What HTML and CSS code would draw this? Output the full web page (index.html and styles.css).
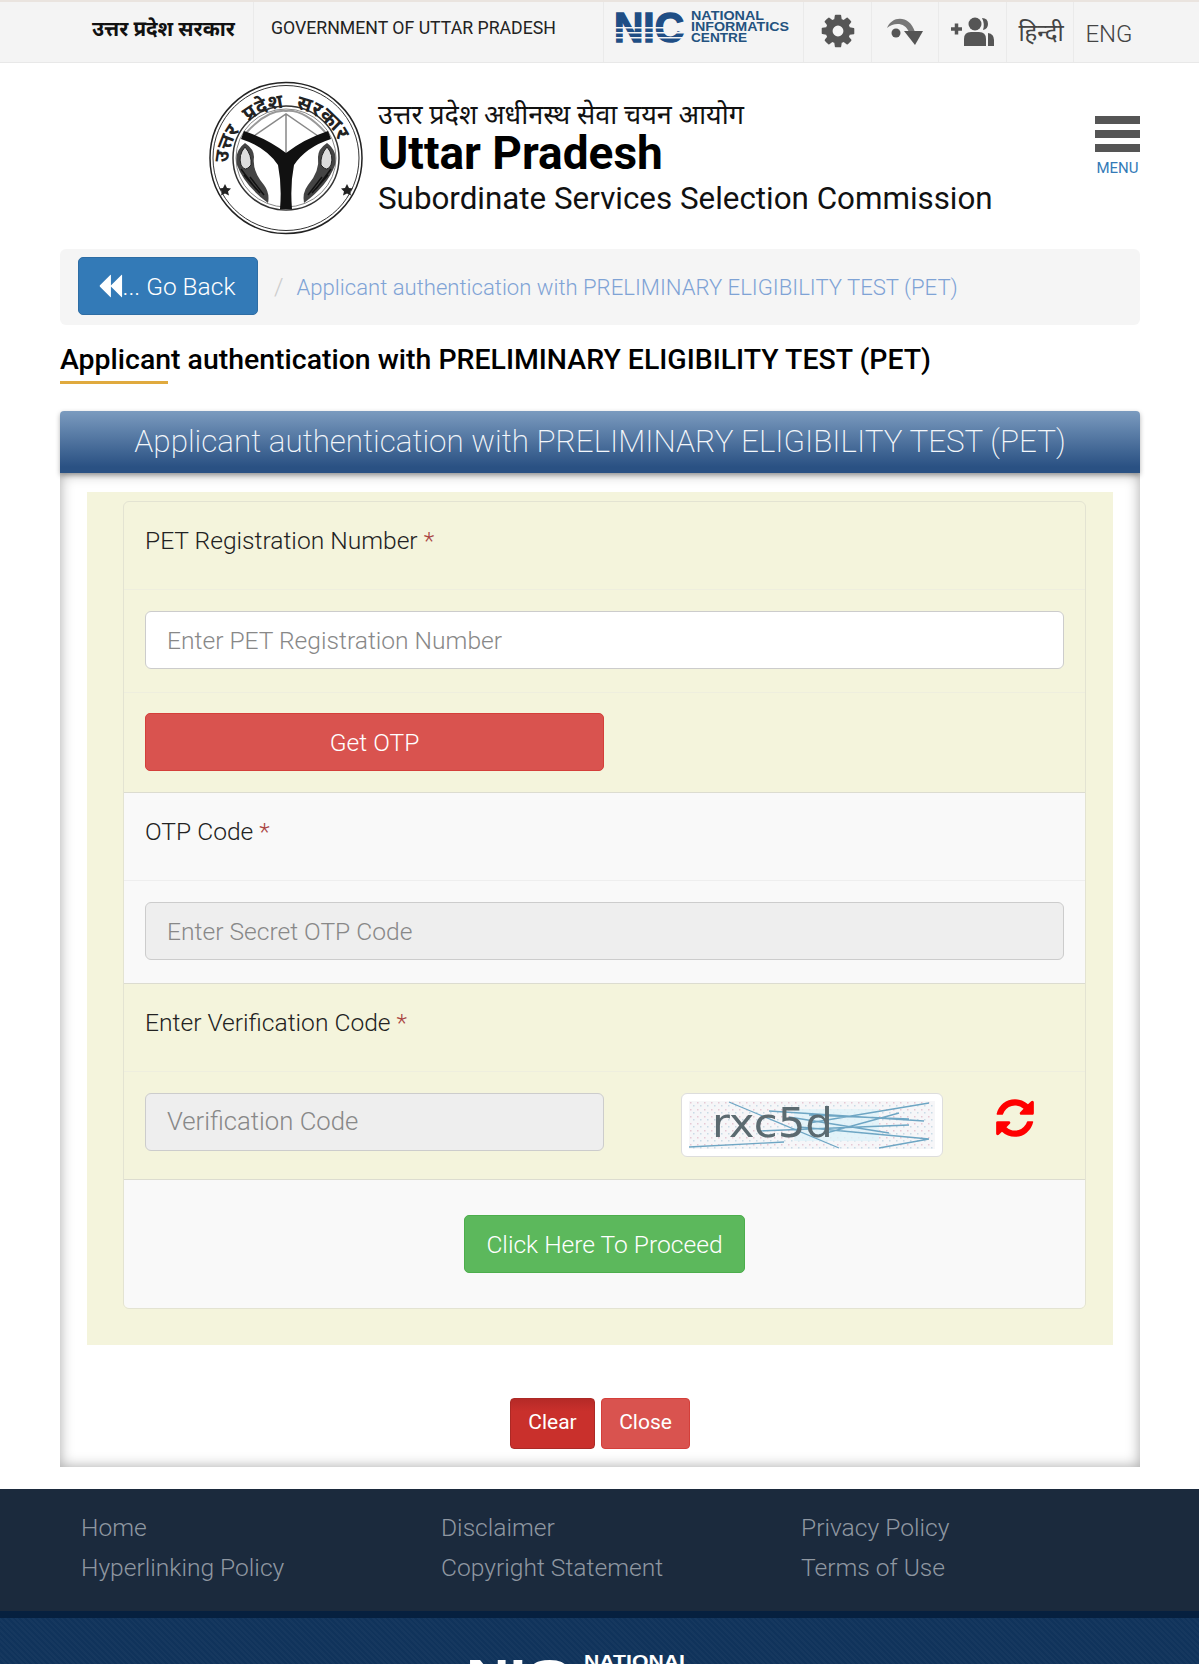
FILE: index.html
```html
<!DOCTYPE html>
<html lang="hi">
<head>
<meta charset="utf-8">
<title>UPSSSC</title>
<link rel="stylesheet" href="styles.css">
</head>
<body>
<div class="topbar">
  <div class="tb-hi">उत्तर प्रदेश सरकार</div>
  <div class="tb-en">GOVERNMENT OF UTTAR PRADESH</div>
  <div class="tb-nic">
    <svg class="nic-logo" viewBox="0 0 176 34" width="176" height="34">
      <text x="0" y="32" class="nic-big" textLength="70" lengthAdjust="spacingAndGlyphs">NIC</text>
      <rect x="-1" y="17" width="72" height="1.500" fill="#f4f4f4"/>
      <rect x="-1" y="22" width="72" height="1.500" fill="#f4f4f4"/>
      <rect x="-1" y="27" width="72" height="1.500" fill="#f4f4f4"/>
      <text x="77" y="10" class="nic-small" textLength="73" lengthAdjust="spacingAndGlyphs">NATIONAL</text>
      <text x="77" y="21" class="nic-small" textLength="98" lengthAdjust="spacingAndGlyphs">INFORMATICS</text>
      <text x="77" y="32" class="nic-small" textLength="56" lengthAdjust="spacingAndGlyphs">CENTRE</text>
    </svg>
  </div>
  <div class="tb-cell tb-gear">
    <svg width="38" height="38" viewBox="0 0 1792 1792"><path fill="#555" d="M1152 896q0-106-75-181t-181-75-181 75-75 181 75 181 181 75 181-75 75-181zm512-109v222q0 12-8 23t-20 13l-185 28q-19 54-39 91 35 50 107 138 10 12 10 25t-9 23q-27 37-99 108t-94 71q-12 0-26-9l-138-108q-44 23-91 38-16 136-29 186-7 28-36 28h-222q-14 0-24.500-8.500t-11.500-21.500l-28-184q-49-16-90-37l-141 107q-10 9-25 9-14 0-25-11-126-114-165-168-7-10-7-23 0-12 8-23 15-21 51-66.500t54-70.500q-27-50-41-99l-183-27q-13-2-21-12.500t-8-23.500v-222q0-12 8-23t19-13l186-28q14-46 39-92-40-57-107-138-10-12-10-24 0-10 9-23 26-36 98.500-107.500t94.500-71.500q13 0 26 10l138 107q44-23 91-38 16-136 29-186 7-28 36-28h222q14 0 24.500 8.500t11.500 21.500l28 184q49 16 90 37l142-107q9-9 24-9 13 0 25 10 129 119 165 170 7 8 7 22 0 12-8 23-15 21-51 66.500t-54 70.500q26 50 41 98l183 28q13 2 21 12.500t8 23.500z"/></svg>
  </div>
  <div class="tb-cell tb-gear">
    <svg width="38" height="34" viewBox="0 0 38 34"><circle cx="10" cy="19" r="4.500" fill="#555"/><path d="M1 14 C6 1 24 1 29 18 L23 18 C19 8 8 8 1 14 Z" fill="#777"/><path d="M18 17 H37 L29 31 Z" fill="#555"/></svg>
  </div>
  <div class="tb-cell">
    <svg width="44" height="32" viewBox="0 0 44 32"><path d="M0 13h11M5.500 7.500v11" stroke="#555" stroke-width="3.500" fill="none"/><circle cx="24" cy="8" r="6.500" fill="#555"/><path d="M13 30 V23 Q13 16 20 16 H28 Q35 16 35 23 V30 Z" fill="#555"/><path d="M31 2 Q37 2 37 8 Q37 13 32 14 Q34 8 31 2 Z" fill="#555"/><path d="M37 17 Q43 18 43 24 V30 H37 Z" fill="#555"/></svg>
  </div>
  <div class="tb-cell tb-lang">हिन्दी</div>
  <div class="tb-eng">ENG</div>
</div>

<header class="brand">
  <svg class="emblem" viewBox="0 0 156 154" width="156" height="154">
    <defs>
      <path id="arc" d="M20 84 A58 57 0 1 1 136 84"/>
      <g id="fish">
        <path d="M37 62 Q26 70 29 84 Q36 104 60 122 Q62 112 56 104 Q44 90 46 76 Q46 68 37 62 Z" fill="#444"/>
        <path d="M37 66 Q30 74 33 84 Q37 92 43 84 Q44 74 37 66 Z" fill="#ddd" stroke="#222" stroke-width="1"/>
        <path d="M36 94 L52 112 M33 88 L48 108 M42 96 L56 114" stroke="#111" stroke-width="1.500" fill="none"/>
      </g>
    </defs>
    <ellipse cx="78" cy="77" rx="76" ry="75.500" fill="#fff" stroke="#222" stroke-width="1.500"/>
    <ellipse cx="78" cy="77" rx="73" ry="72.500" fill="none" stroke="#333" stroke-width="1"/>
    <ellipse cx="78" cy="77" rx="53" ry="52" fill="none" stroke="#333" stroke-width="1.500"/>
    <ellipse cx="78" cy="77" rx="50" ry="49" fill="none" stroke="#888" stroke-width="1"/>
    <text class="emblem-text"><textPath href="#arc" startOffset="2">उत्तर प्रदेश सरकार</textPath></text>
    <path d="M78 33 V80 M46 55 L78 33 L110 55" fill="none" stroke="#888" stroke-width="1.500"/>
    <path d="M38 52 Q60 28 78 30 Q96 28 118 52" fill="none" stroke="#999" stroke-width="2"/>
    <path d="M33 58 Q58 66 70 84 Q74 104 72 128 H84 Q82 104 86 84 Q98 66 123 58 L120 50 Q96 58 78 72 Q60 58 36 50 Z" fill="#111"/>
    <use href="#fish"/>
    <use href="#fish" transform="translate(156 0) scale(-1 1)"/>
    <path d="M17 103 l2 4 4 .5-3 3 1 4-4-2-4 2 1-4-3-3 4-.5z" fill="#222"/>
    <path d="M139 103 l2 4 4 .5-3 3 1 4-4-2-4 2 1-4-3-3 4-.5z" fill="#222"/>
  </svg>
  <div class="brand-text">
    <div class="brand-hi">उत्तर प्रदेश अधीनस्थ सेवा चयन आयोग</div>
    <div class="brand-title">Uttar Pradesh</div>
    <div class="brand-sub">Subordinate Services Selection Commission</div>
  </div>
  <div class="menu">
    <span class="menu-bars"></span>
    <span class="menu-label">MENU</span>
  </div>
</header>

<main class="wrap">
  <nav class="crumb">
    <a class="back-btn"><svg width="26" height="26" viewBox="0 0 1792 1792"><path fill="#fff" d="M1683 141q19-19 32-13t13 32v1472q0 26-13 32t-32-13l-710-710q-9-9-13-19v710q0 26-13 32t-32-13l-710-710q-19-19-19-45t19-45l710-710q19-19 32-13t13 32v710q4-10 13-19z"/></svg><span class="back-text">... Go Back</span></a>
    <span class="crumb-sep">/</span>
    <span class="crumb-link">Applicant authentication with PRELIMINARY ELIGIBILITY TEST (PET)</span>
  </nav>
  <h1 class="page-title">Applicant authentication with PRELIMINARY ELIGIBILITY TEST (PET)</h1>

  <section class="panel">
    <h2 class="panel-head">Applicant authentication with PRELIMINARY ELIGIBILITY TEST (PET)</h2>
    <div class="panel-body">
      <div class="tint">
        <form class="card">
          <div class="group">
            <div class="label-row">PET Registration Number <i>*</i></div>
            <div class="input-row"><div class="field">Enter PET Registration Number</div></div>
            <div class="btn-row"><div class="half"><a class="btn btn-red">Get OTP</a></div></div>
          </div>
          <div class="group group-w">
            <div class="label-row">OTP Code <i>*</i></div>
            <div class="input-row input-row-s"><div class="field field-off">Enter Secret OTP Code</div></div>
          </div>
          <div class="group">
            <div class="label-row">Enter Verification Code <i>*</i></div>
            <div class="captcha-row">
              <div class="half"><div class="field field-off field-lg">Verification Code</div></div>
              <div class="captcha">
                <svg class="captcha-img" viewBox="0 0 246 48" width="246" height="48">
                  <defs>
                    <pattern id="speck" width="7" height="7" patternUnits="userSpaceOnUse">
                      <rect width="7" height="7" fill="#f6f6f8"/>
                      <rect x="1" y="1" width="1.500" height="1.500" fill="#e6c9d4"/>
                      <rect x="4" y="4" width="1.500" height="1.500" fill="#c9dbe6"/>
                    </pattern>
                  </defs>
                  <rect width="246" height="48" fill="url(#speck)"/>
                  <rect x="105" y="8" width="85" height="32" fill="#dff2f9" opacity=".8"/>
                  <g stroke="#6ea6c4" stroke-width="1.300" fill="none">
                    <path d="M0 46 L95 41 M40 1 L150 47 M80 10 L235 20 M120 22 L240 2 M110 26 L240 38 M100 16 L200 32 M190 47 L240 38 M70 30 L220 24 M130 34 L210 12 M120 14 L220 18"/>
                  </g>
                  <text x="23" y="36" class="captcha-text" textLength="121" lengthAdjust="spacingAndGlyphs">rxc5d</text>
                </svg>
              </div>
              <svg class="refresh" width="44" height="44" viewBox="0 0 1792 1792"><path fill="#f00" d="M1639 1056q0 5-1 7-64 268-268 434.500t-478 166.500q-146 0-282.500-55t-243.500-157l-129 129q-19 19-45 19t-45-19-19-45v-448q0-26 19-45t45-19h448q26 0 45 19t19 45-19 45l-137 137q71 66 161 102t187 36q134 0 250-65t186-179q11-17 53-117 8-23 30-23h192q13 0 22.500 9.500t9.500 22.500zm25-800v448q0 26-19 45t-45 19h-448q-26 0-45-19t-19-45 19-45l138-138q-148-137-349-137-134 0-250 65t-186 179q-11 17-53 117-8 23-30 23h-199q-13 0-22.500-9.500t-9.500-22.500v-7q65-268 270-434.500t480-166.500q146 0 284 55.500t245 156.500l130-129q19-19 45-19t45 19 19 45z"/></svg>
            </div>
          </div>
          <div class="group group-w proceed">
            <a class="btn btn-green">Click Here To Proceed</a>
          </div>
        </form>
      </div>
      <div class="actions">
        <a class="act act-dark">Clear</a>
        <a class="act act-light">Close</a>
      </div>
    </div>
  </section>
</main>

<footer class="foot">
  <div class="foot-links">
    <a>Home</a><a>Disclaimer</a><a>Privacy Policy</a>
    <a>Hyperlinking Policy</a><a>Copyright Statement</a><a>Terms of Use</a>
  </div>
  <div class="foot-bottom">
    <svg viewBox="0 0 226 40" width="226" height="40">
      <text x="0" y="34" class="foot-nic" textLength="104" lengthAdjust="spacingAndGlyphs">NIC</text>
      <text x="118" y="13" class="foot-nat" textLength="108" lengthAdjust="spacingAndGlyphs">NATIONAL</text>
    </svg>
  </div>
</footer>
</body>
</html>
```

FILE: styles.css
```css
* { box-sizing: border-box; }
html, body { margin: 0; padding: 0; height: 1664px; overflow: hidden; }
body { background: #fff; color: #000; font-family: Roboto, "Noto Sans", "Noto Sans Devanagari", "Liberation Sans", sans-serif; width: 1199px; }
a { text-decoration: none; }

.topbar { height: 63px; background: #f4f4f4; border-top: 2px solid #eae4df; border-bottom: 1px solid #e8e8e8; display: flex; align-items: stretch; padding-left: 92px; }
.tb-hi { width: 162px; font-size: 20.6px; font-weight: 700; display: flex; align-items: center; color: #111; padding-bottom: 9px; border-right: 1px solid #eaeaea; white-space: nowrap; }
.tb-en { width: 350px; padding-left: 17px; font-size: 17.7px; color: #222; display: flex; align-items: center; padding-bottom: 9px; border-right: 1px solid #eaeaea; white-space: nowrap; }
.tb-nic { width: 200px; padding: 8px 0 0 10px; border-right: 1px solid #eaeaea; }
.nic-logo { overflow: visible; display: block; }
.nic-big { font-family: "Liberation Sans", sans-serif; font-weight: 700; font-size: 43px; fill: #1f4e85; stroke: #1f4e85; stroke-width: 1.500px; }
.nic-small { font-family: "Liberation Sans", sans-serif; font-weight: 700; font-size: 13px; fill: #23527f; }
.tb-cell { width: 67.6px; border-right: 1px solid #eaeaea; display: flex; align-items: center; justify-content: center; padding-left: 1px; padding-bottom: 1px; }
.tb-gear { padding-bottom: 3px; }
.tb-lang { font-size: 24px; color: #444; padding-left: 2px; }
.tb-eng { padding-left: 11px; font-size: 24px; color: #444; display: flex; align-items: center; font-weight: 300; padding-top: 3px; }

.brand { height: 184px; display: flex; align-items: flex-start; padding: 18px 59px 0 208px; position: relative; }
.emblem { flex: none; }
.brand-text { margin-left: 14px; padding-top: 17px; flex: 1; }
.brand-hi { font-size: 27px; line-height: 34px; color: #111; }
.brand-title { font-size: 46px; font-weight: 700; line-height: 43px; }
.brand-sub { font-size: 31.35px; line-height: 47px; color: #111; }
.menu { width: 46px; margin-top: 35px; display: flex; flex-direction: column; align-items: center; padding-left: 1px; }
.menu-bars { width: 45px; height: 36px; display: block; background: linear-gradient(#555 0 8px, transparent 8px 14px, #555 14px 22px, transparent 22px 28px, #555 28px 36px); }
.menu-label { font-size: 15px; color: #337ab7; margin-top: 7px; font-weight: 400; line-height: 18px; }
.emblem-text { font-size: 20px; font-weight: 700; fill: #222; word-spacing: 7px; }

.wrap { padding: 2px 59px 0 60px; }
.crumb { height: 76px; background: #f5f5f5; border-radius: 6px; display: flex; align-items: flex-start; padding: 8px 0 0 18px; font-size: 24px; font-weight: 300; }
.back-btn { width: 180px; height: 58px; background: #337ab7; border: 1px solid #2e6da4; border-radius: 5px; color: #fff; display: flex; align-items: center; justify-content: center; font-size: 24.5px; padding: 0 4px 0 0; }
.back-text { font-weight: 300; }
.crumb-sep { color: #ccc; margin: 16px 13px 0 16px; }
.crumb-link { color: #7fa3d5; font-size: 22.1px; margin-top: 17px; white-space: nowrap; }
.page-title { margin: 17px 0 0; font-size: 28.45px; font-weight: 500; line-height: 36px; position: relative; height: 60px; color: #000; white-space: nowrap; }
.page-title::after { content: ""; position: absolute; left: 0; top: 39px; width: 108px; height: 3px; background: #e0aa3e; }

.panel { display: block; }
.panel-head { margin: 9px 0 0; height: 62px; background: linear-gradient(#7b9bbf, #2a5183 90%, #2a5183); border-radius: 4px 4px 0 0; color: #f4f7fb; font-size: 31.4px; font-weight: 200; line-height: 62px; text-align: center; box-shadow: 0 2px 5px rgba(0,0,0,.3); position: relative; white-space: nowrap; }
.panel-body { background: #fff; box-shadow: inset 0 0 14px rgba(0,0,0,.35); padding: 19px 27px 0 27px; height: 994px; }
.tint { background: #f4f4dc; padding: 9px 27px 37px 36px; height: 853px; }
.card { border: 1px solid #e3e3d2; border-radius: 6px; height: 808px; overflow: hidden; display: block; }
.group { border-bottom: 1px solid #dcdcd0; }
.group-w { background: #f9f9f9; }
.label-row { height: 88px; padding: 21px 21px 0; font-size: 24.6px; font-weight: 300; line-height: 36px; color: #222; border-bottom: 1px solid #eeeede; }
.label-row i { color: #a94442; font-style: normal; }
.group-w .label-row { border-bottom-color: #eee; }
.input-row { height: 103px; padding: 21px 21px 0; }
.input-row-s { height: 102px; }
.group:first-child .input-row { border-bottom: 1px solid #eeeede; }
.field { height: 58px; background: #fff; border: 1px solid #ccc; border-radius: 6px; padding: 0 21px; font-size: 24.6px; font-weight: 300; color: #888; line-height: 58px; }
.field-off { background: #eee; }
.field-lg { font-size: 25.7px; line-height: 54px; }
.btn-row { height: 99px; padding: 20px 21px 0; }
.half { width: 459px; flex: none; }
.btn { display: block; height: 58px; border-radius: 5px; color: #fff; font-size: 24.6px; font-weight: 300; text-align: center; line-height: 57px; }
.btn-red { background: #d9534f; border: 1px solid #d43f3a; }
.btn-green { background: #5cb85c; border: 1px solid #4cae4c; width: 281px; }
.captcha-row { height: 107px; padding: 21px 21px 0; display: flex; align-items: flex-start; }
.captcha { margin-left: 77px; width: 262px; height: 64px; background: #fff; border: 1px solid #ddd; border-radius: 6px; padding: 7px; flex: none; }
.captcha-img { display: block; filter: blur(.7px); }
.captcha-text { font-family: "DejaVu Sans", sans-serif; font-size: 40px; fill: #5b6a70; }
.refresh { margin: 3px 0 0 50px; flex: none; }
.proceed { border-bottom: 0; height: 129px; padding-top: 35px; display: flex; justify-content: center; }
.actions { display: flex; justify-content: center; gap: 6px; padding: 53px 0 0 0; }
.act { height: 51px; border-radius: 4px; color: #fff; font-size: 21px; font-weight: 400; line-height: 47px; text-align: center; }
.act-dark { width: 85px; background: linear-gradient(#b52a27, #c9302c 25%); border: 1px solid #ac2925; }
.act-light { width: 89px; background: #d9534f; border: 1px solid #d43f3a; }

.foot { margin-top: 22px; }
.foot-links { height: 122px; background: #1b2a3d; padding: 19px 0 0 81px; display: grid; grid-template-columns: 360px 360px 360px; grid-auto-rows: 40px; font-size: 24.6px; font-weight: 300; }
.foot-links a { color: #8f97a1; line-height: 40px; }
.foot-bottom { height: 60px; border-top: 7px solid #06203f; background: #10335b; background-image: repeating-linear-gradient(45deg, rgba(255,255,255,.025) 0 2px, transparent 2px 4px); padding: 37px 0 0 466px; }
.foot-nic { font-family: "Liberation Sans", sans-serif; font-weight: 700; font-size: 42px; fill: #fff; }
.foot-nat { font-family: "Liberation Sans", sans-serif; font-weight: 700; font-size: 18px; fill: #fff; }
```
